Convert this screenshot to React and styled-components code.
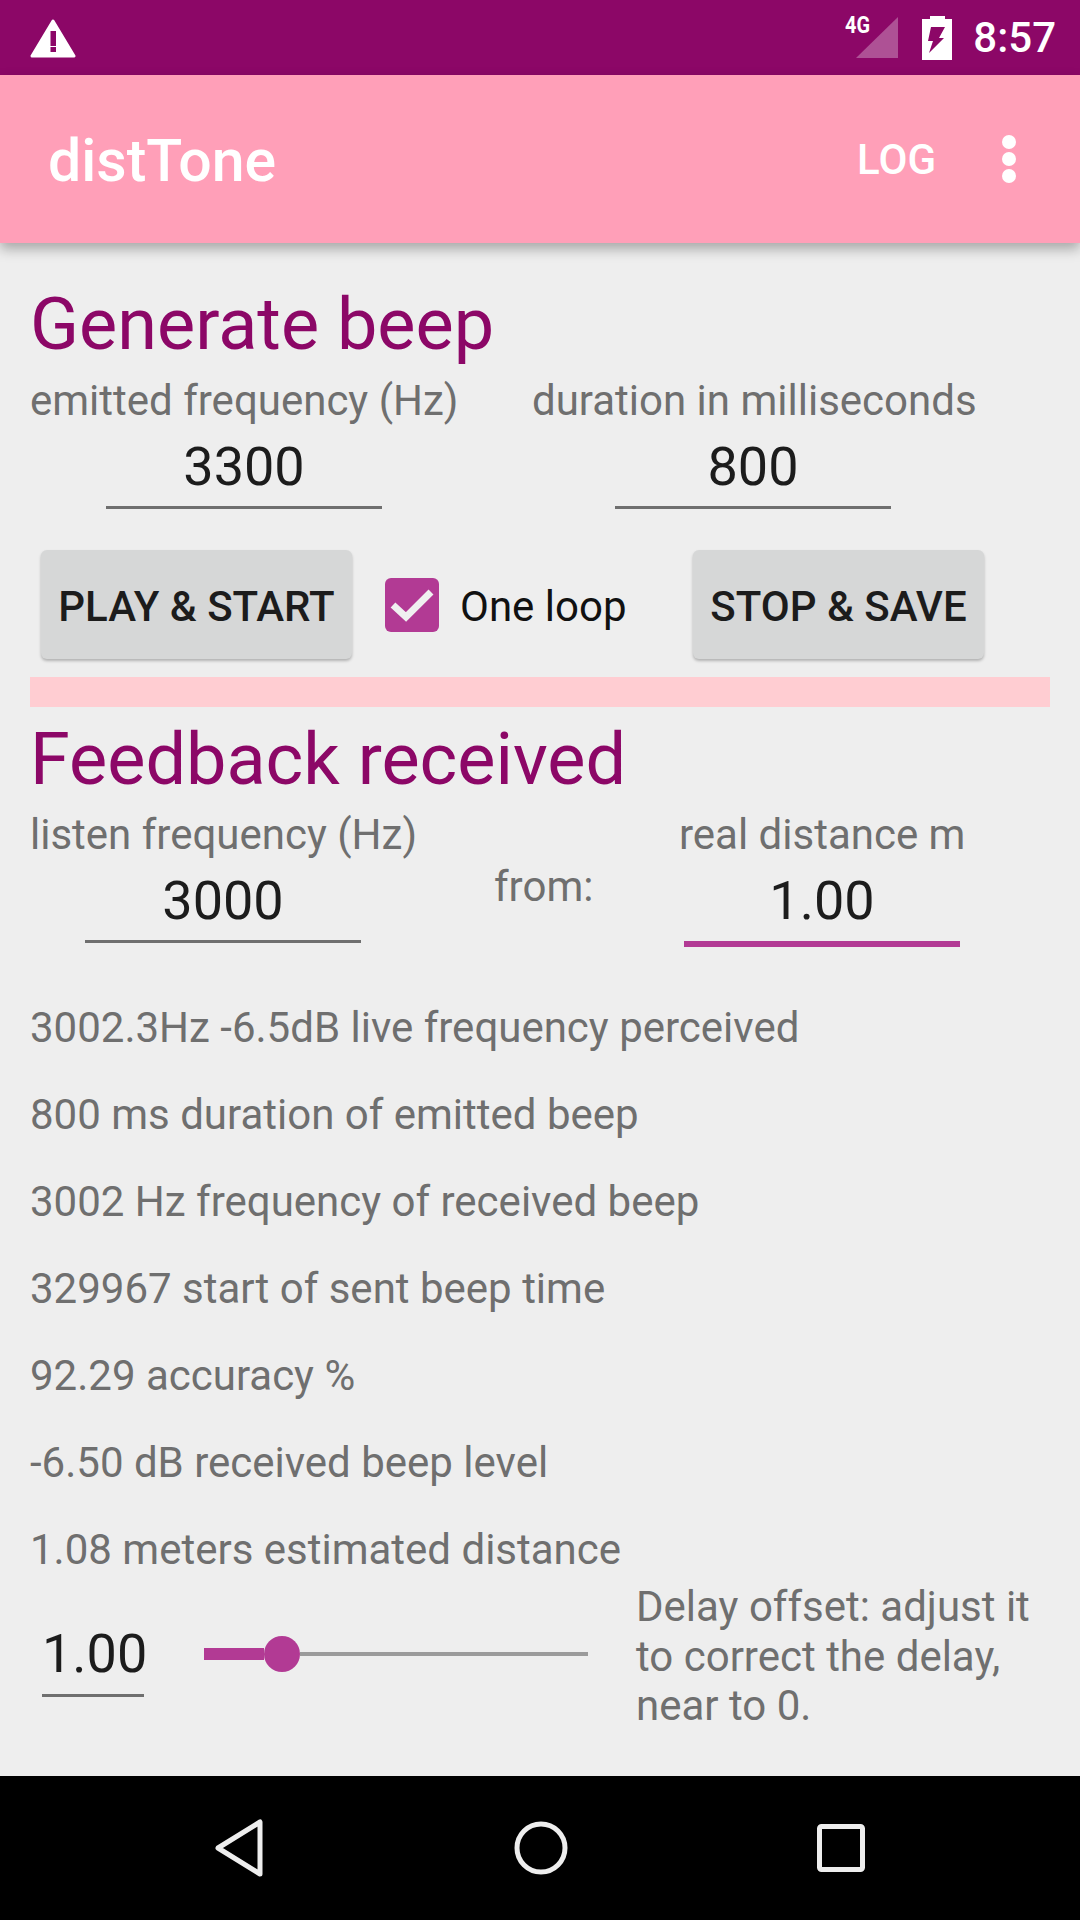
import React from 'react';
import styled, { createGlobalStyle } from 'styled-components';

const GlobalStyle = createGlobalStyle`
  html, body {
    margin: 0;
    padding: 0;
    background: #eeeeee;
  }
  body {
    font-family: Roboto, "Noto Sans", sans-serif;
  }
`;

const accent = '#b23a94';
const purple = '#8c0767';

const Screen = styled.div`
  width: 1080px;
  height: 1920px;
  display: flex;
  flex-direction: column;
  background: #eeeeee;
  overflow: hidden;
`;

const StatusBar = styled.div`
  height: 75px;
  flex: none;
  display: flex;
  align-items: center;
  justify-content: space-between;
  padding: 0 24px 0 30px;
  background: ${purple};
`;

const StatusRight = styled.div`
  display: flex;
  align-items: center;
  gap: 24px;
`;

const Clock = styled.span`
  margin-left: -3px;
  font-size: 42px;
  font-weight: 500;
  color: #fff;
`;

const AppBar = styled.header`
  height: 168px;
  flex: none;
  display: flex;
  align-items: center;
  justify-content: space-between;
  padding: 0 64px 0 48px;
  background: #ff9fb8;
  color: #fff;
  box-shadow: 0 6px 12px rgba(0, 0, 0, 0.3);
  position: relative;
`;

const AppTitle = styled.h1`
  margin: 3px 0 0;
  font-size: 59px;
  font-weight: 500;
`;

const AppActions = styled.div`
  display: flex;
  align-items: center;
  gap: 66px;
`;

const LogAction = styled.span`
  font-size: 42px;
  font-weight: 500;
`;

const Content = styled.main`
  flex: 1;
  padding: 42px 30px 0;
`;

const Heading = styled.h2`
  margin: 0 0 ${(p) => p.$gap}px;
  height: 80px;
  font-size: 72px;
  line-height: 80px;
  font-weight: 400;
  color: ${purple};
`;

const FieldRow = styled.div`
  display: flex;
  height: ${(p) => p.$height}px;
`;

const Field = styled.div`
  width: ${(p) => p.$width}px;
  flex: none;
`;

const FieldLabel = styled.div`
  height: 50px;
  line-height: 48px;
  font-size: 42px;
  color: #6f6f6f;
  white-space: nowrap;
`;

const FieldValue = styled.div`
  width: 276px;
  height: ${(p) => (p.$active ? 86 : 82)}px;
  margin-left: ${(p) => p.$indent || 0}px;
  box-sizing: border-box;
  text-align: center;
  font-size: 54px;
  line-height: 79px;
  color: #1c1c1c;
  border-bottom: ${(p) => (p.$active ? `6px solid ${accent}` : '3px solid #6f6f6f')};
`;

const ButtonRow = styled.div`
  display: flex;
  align-items: center;
  height: 109px;
  padding-left: 11px;
  margin-top: 42px;
`;

const RaisedButton = styled.button`
  height: 109px;
  width: ${(p) => p.$width}px;
  padding: 3px 0 0;
  border: none;
  border-radius: 6px;
  background: #d6d7d7;
  box-shadow: 0 2px 3px rgba(0, 0, 0, 0.25);
  font-family: inherit;
  font-size: 42px;
  font-weight: 500;
  color: #1c1c1c;
`;

const CheckWrap = styled.label`
  display: flex;
  align-items: center;
  width: 341px;
  padding-left: 33px;
  box-sizing: border-box;
  font-size: 42px;
  color: #111;
`;

const CheckBox = styled.span`
  width: 54px;
  height: 54px;
  flex: none;
  margin-right: 21px;
  border-radius: 6px;
  background: ${accent};
  display: flex;
`;

const CheckText = styled.span`
  padding-top: 4px;
`;

const Divider = styled.div`
  height: 30px;
  margin-top: 18px;
  margin-bottom: 13px;
  background: #ffcdd2;
`;

const FromLabel = styled.div`
  width: 185px;
  flex: none;
  padding-top: 51px;
  height: 50px;
  line-height: 50px;
  font-size: 42px;
  color: #6f6f6f;
`;

const ReadoutList = styled.div`
  margin-top: 40px;
`;

const Readout = styled.div`
  height: 87px;
  line-height: 87px;
  font-size: 42px;
  color: #6f6f6f;
  white-space: nowrap;
`;

const DelayRow = styled.div`
  display: flex;
  align-items: flex-start;
  margin-top: -12px;
`;

const DelayValue = styled.div`
  width: 102px;
  height: 85px;
  margin: 31px 0 0 12px;
  flex: none;
  box-sizing: border-box;
  font-size: 54px;
  line-height: 83px;
  text-align: center;
  color: #1c1c1c;
  border-bottom: 3px solid #6f6f6f;
`;

const Slider = styled.div`
  width: 384px;
  height: 36px;
  margin: 55px 48px 0 60px;
  flex: none;
  display: flex;
  align-items: center;
`;

const SliderFill = styled.div`
  width: 60px;
  height: 12px;
  flex: none;
  background: ${accent};
`;

const SliderThumb = styled.div`
  width: 36px;
  height: 36px;
  flex: none;
  border-radius: 50%;
  background: ${accent};
`;

const SliderRest = styled.div`
  flex: 1;
  height: 4px;
  background: #9b9b9b;
`;

const DelayText = styled.div`
  margin-top: 1px;
  font-size: 42px;
  line-height: 49.5px;
  color: #6f6f6f;
`;

const NavBar = styled.nav`
  height: 144px;
  flex: none;
  display: flex;
  align-items: center;
  justify-content: space-between;
  padding: 0 215px 0 214px;
  background: #000;
`;

const readouts = [
  '3002.3Hz -6.5dB live frequency perceived',
  '800 ms duration of emitted beep',
  '3002 Hz frequency of received beep',
  '329967 start of sent beep time',
  '92.29 accuracy %',
  '-6.50 dB received beep level',
  '1.08 meters estimated distance',
];

export default function App() {
  return (
    <Screen>
      <GlobalStyle />
      <StatusBar>
        <svg width="46" height="40" viewBox="0 0 46 40">
          <path fill="#fff" stroke="#fff" strokeWidth="3" strokeLinejoin="round" d="M23 3 44 38H2Z" />
          <rect x="20.5" y="13" width="5.5" height="15" fill={purple} />
          <rect x="20.5" y="29" width="5.5" height="5" fill={purple} />
        </svg>
        <StatusRight>
          <svg width="53" height="60" viewBox="0 0 53 60">
            <text
              x="0"
              y="25"
              fontFamily="Roboto"
              fontSize="24"
              fontWeight="700"
              fill="#fff"
              textLength="25"
              lengthAdjust="spacingAndGlyphs"
            >
              4G
            </text>
            <path fill="#fff" fillOpacity="0.3" d="M11 50 53 9V50Z" />
          </svg>
          <svg width="30" height="44" viewBox="0 0 30 44">
            <path
              fillRule="evenodd"
              fill="#fff"
              d="M8 0H23V3H30V44H0V3H8ZM9 11H23L17 22H22L7 37 11 25H6Z"
            />
          </svg>
          <Clock>8:57</Clock>
        </StatusRight>
      </StatusBar>

      <AppBar>
        <AppTitle>distTone</AppTitle>
        <AppActions>
          <LogAction>LOG</LogAction>
          <svg width="14" height="48" viewBox="0 0 14 48">
            <circle cx="7" cy="7" r="7" fill="#fff" />
            <circle cx="7" cy="24" r="7" fill="#fff" />
            <circle cx="7" cy="41" r="7" fill="#fff" />
          </svg>
        </AppActions>
      </AppBar>

      <Content>
        <Heading $gap={12}>Generate beep</Heading>
        <FieldRow $height={131}>
          <Field $width={502}>
            <FieldLabel>emitted frequency (Hz)</FieldLabel>
            <FieldValue $indent={76}>3300</FieldValue>
          </Field>
          <Field $width={500}>
            <FieldLabel>duration in milliseconds</FieldLabel>
            <FieldValue $indent={83}>800</FieldValue>
          </Field>
        </FieldRow>
        <ButtonRow>
          <RaisedButton $width={311}>PLAY &amp; START</RaisedButton>
          <CheckWrap>
            <CheckBox>
              <svg width="54" height="54" viewBox="0 0 54 54">
                <path d="M8 27 21 39 46 14" fill="none" stroke="#f0f0f0" strokeWidth="7" />
              </svg>
            </CheckBox>
            <CheckText>One loop</CheckText>
          </CheckWrap>
          <RaisedButton $width={291}>STOP &amp; SAVE</RaisedButton>
        </ButtonRow>
        <Divider />
        <Heading $gap={11}>Feedback received</Heading>
        <FieldRow $height={133}>
          <Field $width={464}>
            <FieldLabel>listen frequency (Hz)</FieldLabel>
            <FieldValue $indent={55}>3000</FieldValue>
          </Field>
          <FromLabel>from:</FromLabel>
          <Field $width={340}>
            <FieldLabel>real distance m</FieldLabel>
            <FieldValue $indent={5} $active>
              1.00
            </FieldValue>
          </Field>
        </FieldRow>
        <ReadoutList>
          {readouts.map((line) => (
            <Readout key={line}>{line}</Readout>
          ))}
        </ReadoutList>
        <DelayRow>
          <DelayValue>1.00</DelayValue>
          <Slider>
            <SliderFill />
            <SliderThumb />
            <SliderRest />
          </Slider>
          <DelayText>
            Delay offset: adjust it
            <br />
            to correct the delay,
            <br />
            near to 0.
          </DelayText>
        </DelayRow>
      </Content>

      <NavBar>
        <svg width="50" height="58" viewBox="0 0 50 58">
          <path d="M46 3V55L4 29Z" fill="none" stroke="#eee" strokeWidth="5" strokeLinejoin="round" />
        </svg>
        <svg width="54" height="54" viewBox="0 0 54 54">
          <circle cx="27" cy="27" r="24" fill="none" stroke="#eee" strokeWidth="5" />
        </svg>
        <svg width="48" height="48" viewBox="0 0 48 48">
          <rect x="2.5" y="2.5" width="43" height="43" rx="2" fill="none" stroke="#eee" strokeWidth="5" />
        </svg>
      </NavBar>
    </Screen>
  );
}
